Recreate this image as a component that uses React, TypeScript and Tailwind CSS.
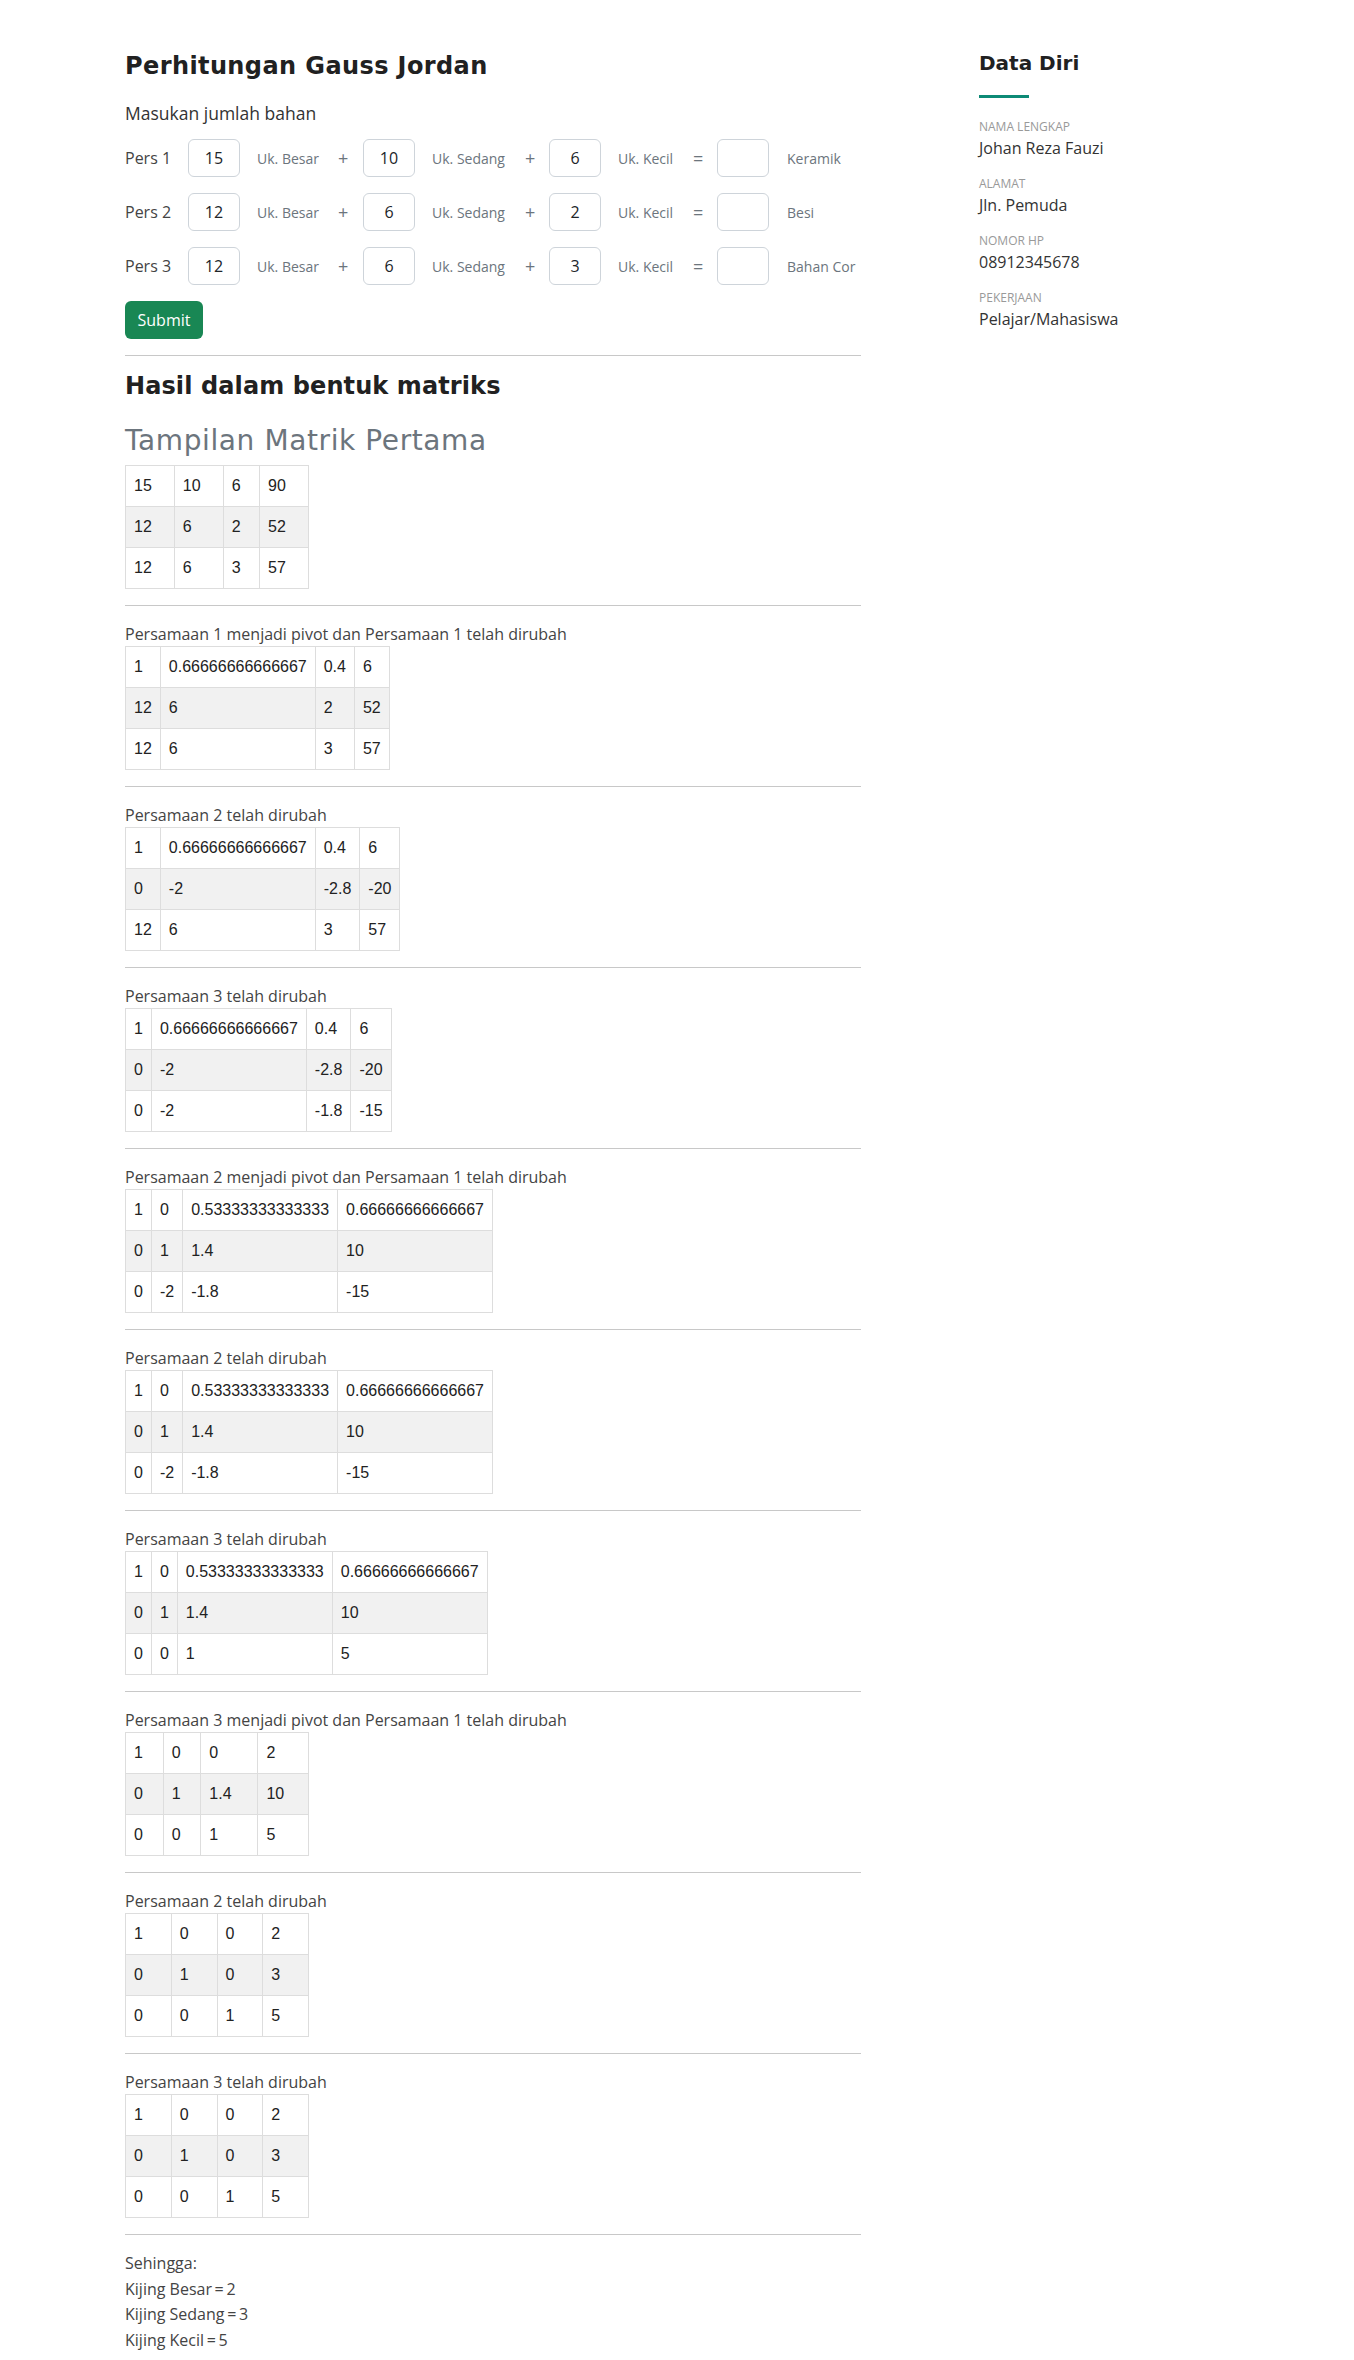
import React from 'react';

type Row = string[];

interface Step {
  title: string;
  rows: Row[];
}

const firstMatrix: Row[] = [
  ['15', '10', '6', '90'],
  ['12', '6', '2', '52'],
  ['12', '6', '3', '57'],
];

const steps: Step[] = [
  {
    title: 'Persamaan 1 menjadi pivot dan Persamaan 1 telah dirubah',
    rows: [
      ['1', '0.66666666666667', '0.4', '6'],
      ['12', '6', '2', '52'],
      ['12', '6', '3', '57'],
    ],
  },
  {
    title: 'Persamaan 2 telah dirubah',
    rows: [
      ['1', '0.66666666666667', '0.4', '6'],
      ['0', '-2', '-2.8', '-20'],
      ['12', '6', '3', '57'],
    ],
  },
  {
    title: 'Persamaan 3 telah dirubah',
    rows: [
      ['1', '0.66666666666667', '0.4', '6'],
      ['0', '-2', '-2.8', '-20'],
      ['0', '-2', '-1.8', '-15'],
    ],
  },
  {
    title: 'Persamaan 2 menjadi pivot dan Persamaan 1 telah dirubah',
    rows: [
      ['1', '0', '0.53333333333333', '0.66666666666667'],
      ['0', '1', '1.4', '10'],
      ['0', '-2', '-1.8', '-15'],
    ],
  },
  {
    title: 'Persamaan 2 telah dirubah',
    rows: [
      ['1', '0', '0.53333333333333', '0.66666666666667'],
      ['0', '1', '1.4', '10'],
      ['0', '-2', '-1.8', '-15'],
    ],
  },
  {
    title: 'Persamaan 3 telah dirubah',
    rows: [
      ['1', '0', '0.53333333333333', '0.66666666666667'],
      ['0', '1', '1.4', '10'],
      ['0', '0', '1', '5'],
    ],
  },
  {
    title: 'Persamaan 3 menjadi pivot dan Persamaan 1 telah dirubah',
    rows: [
      ['1', '0', '0', '2'],
      ['0', '1', '1.4', '10'],
      ['0', '0', '1', '5'],
    ],
  },
  {
    title: 'Persamaan 2 telah dirubah',
    rows: [
      ['1', '0', '0', '2'],
      ['0', '1', '0', '3'],
      ['0', '0', '1', '5'],
    ],
  },
  {
    title: 'Persamaan 3 telah dirubah',
    rows: [
      ['1', '0', '0', '2'],
      ['0', '1', '0', '3'],
      ['0', '0', '1', '5'],
    ],
  },
];

const equations = [
  { label: 'Pers 1', values: ['15', '10', '6'], name: 'Keramik' },
  { label: 'Pers 2', values: ['12', '6', '2'], name: 'Besi' },
  { label: 'Pers 3', values: ['12', '6', '3'], name: 'Bahan Cor' },
];

const profile = [
  { label: 'Nama Lengkap', value: 'Johan Reza Fauzi' },
  { label: 'Alamat', value: 'Jln. Pemuda' },
  { label: 'Nomor HP', value: '08912345678' },
  { label: 'Pekerjaan', value: 'Pelajar/Mahasiswa' },
];

const results = [
  ['Kijing Besar', '2'],
  ['Kijing Sedang', '3'],
  ['Kijing Kecil', '5'],
];

const Matrix = ({ rows }: { rows: Row[] }) => (
  <table className="w-1/4 table-auto border-collapse font-['Liberation_Sans',Arial,sans-serif] text-[16px] leading-[24px] text-[#222222]">
    <tbody>
      {rows.map((row, i) => (
        <tr key={i} className={i % 2 === 1 ? 'bg-[#f1f1f1]' : 'bg-white'}>
          {row.map((cell, j) => (
            <td key={j} className="border border-[#dddddd] px-2 py-2 text-left">
              {cell}
            </td>
          ))}
        </tr>
      ))}
    </tbody>
  </table>
);

const NumBox = ({ value }: { value: string }) => (
  <input
    readOnly
    value={value}
    className="h-[38px] w-[52px] rounded-[6px] border border-[#ced4da] bg-white text-center text-[16px] text-[#212529] outline-none"
  />
);

const Divider = () => <hr className="my-4 border-0 border-t border-[#c8c8c8]" />;

const App = () => {
  return (
    <div className="flex min-h-[2360px] bg-white font-['Open_Sans',sans-serif] text-[#444444]">
      <main className="ml-[125px] w-[736px] pt-[52px]">
        <h1 className="font-['DejaVu_Sans',sans-serif] text-[24px] font-bold leading-[29px] tracking-[0.4px] text-[#212121]">
          Perhitungan Gauss Jordan
        </h1>
        <p className="mt-[19px] text-[17.5px] leading-[26px] text-[#333]">Masukan jumlah bahan</p>

        <div className="mt-[13px] flex flex-col gap-[16px]">
          {equations.map((eq) => (
            <div key={eq.label} className="flex items-center text-[14px] text-[#6c757d]">
              <span className="w-[63px] text-[16px] text-[#444444]">{eq.label}</span>
              <NumBox value={eq.values[0]} />
              <span className="ml-[17px] w-[81px]">Uk. Besar</span>
              <span className="w-[25px] text-[18px] leading-[24px]">+</span>
              <NumBox value={eq.values[1]} />
              <span className="ml-[17px] w-[93px]">Uk. Sedang</span>
              <span className="w-[24px] text-[18px] leading-[24px]">+</span>
              <NumBox value={eq.values[2]} />
              <span className="ml-[17px] w-[75px]">Uk. Kecil</span>
              <span className="w-[24px] text-[18px] leading-[24px]">=</span>
              <NumBox value="" />
              <span className="ml-[18px]">{eq.name}</span>
            </div>
          ))}
        </div>

        <button className="mt-[16px] h-[38px] w-[78px] rounded-[6px] bg-[#198754] text-[16px] text-white">
          Submit
        </button>

        <Divider />

        <h2 className="font-['DejaVu_Sans',sans-serif] text-[24px] font-bold leading-[29px] tracking-[0.1px] text-[#212121]">
          Hasil dalam bentuk matriks
        </h2>
        <h3 className="mt-[23px] font-['DejaVu_Sans',sans-serif] text-[28px] font-normal leading-[34px] tracking-[0.6px] text-[#6c757d]">
          Tampilan Matrik Pertama
        </h3>
        <div className="mt-[7px]">
          <Matrix rows={firstMatrix} />
        </div>

        {steps.map((step, i) => (
          <section key={i}>
            <Divider />
            <p className="text-[16px] leading-[24px]">{step.title}</p>
            <Matrix rows={step.rows} />
          </section>
        ))}

        <Divider />
        <div className="text-[16px] leading-[25.5px]">
          <p>Sehingga:</p>
          {results.map(([name, value]) => (
            <p key={name}>
              {name}
              {'\u2009=\u2009'}
              {value}
            </p>
          ))}
        </div>
      </main>

      <aside className="ml-[118px] w-[240px] pt-[51px]">
        <h2 className="font-['DejaVu_Sans',sans-serif] text-[20px] font-bold leading-[24px] text-[#212121]">
          Data Diri
        </h2>
        <div className="mt-[20px] h-[3px] w-[50px] bg-[#0d8a76]" />
        <dl className="mt-[20px] flex flex-col gap-[15px]">
          {profile.map((item) => (
            <div key={item.label}>
              <dt className="text-[12px] uppercase leading-[18px] text-[#999999]">{item.label}</dt>
              <dd className="text-[16px] leading-[24px] text-[#333333]">{item.value}</dd>
            </div>
          ))}
        </dl>
      </aside>
    </div>
  );
};

export default App;
